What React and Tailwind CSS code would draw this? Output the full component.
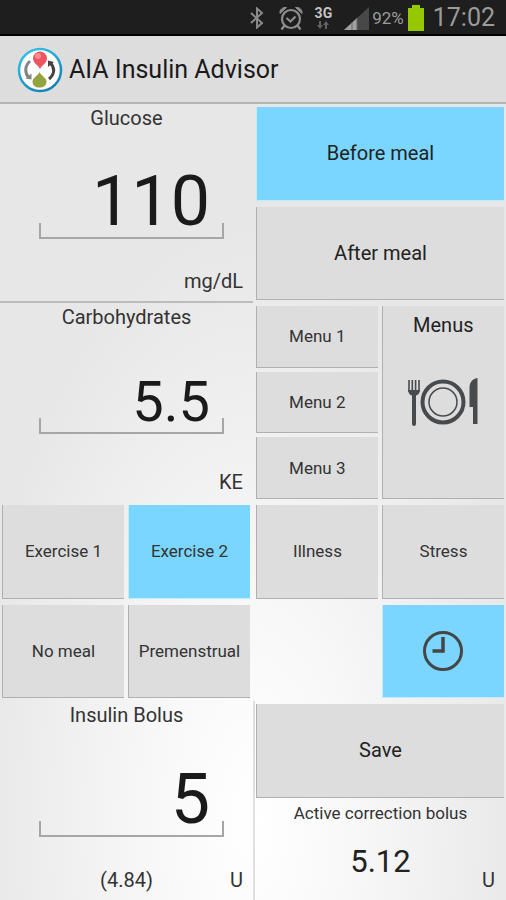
import { useState } from 'react'
import clsx from 'clsx'

function StatusBar() {
  return (
    <div className="h-[36px] shrink-0 bg-[#1e1e1e] border-b-2 border-black flex items-center justify-end pt-[2px] pr-[11px] text-[#9b9b9b]">
      {/* Bluetooth */}
      <svg width="16" height="22" viewBox="0 0 16 22" fill="none" stroke="#8a8a8a" strokeWidth="2">
        <path d="M2 6l11 10-5 4.500V1.500L13 6 2 16" />
      </svg>
      {/* Alarm */}
      <svg className="ml-[13px]" width="26" height="26" viewBox="0 0 26 26" fill="none" stroke="#8e8e8e" strokeWidth="2.200">
        <circle cx="13" cy="14" r="9" />
        <path d="M8.500 13l4 3.500 5-5M6.500 20.500l-3 4M19.500 20.500l3 4" />
        <path d="M2 8.500C1.500 4.500 4.500 2 8.500 2.500zM24 8.500c.5-4-2.500-6.500-6.500-6z" fill="#8e8e8e" strokeWidth="1" />
      </svg>
      {/* Network */}
      <div className="ml-[11px] flex flex-col items-center">
        <span className="text-[14px] leading-[14px] font-bold text-[#c4c4c4]">3G</span>
        <svg width="16" height="10" viewBox="0 0 16 10" fill="#626262">
          <path d="M4 1h2v4h2L5 9 2 5h2zM10 9V5H8l3-4 3 4h-2v4z" />
        </svg>
      </div>
      {/* Signal */}
      <svg className="ml-[12px]" width="25" height="23" viewBox="0 0 25 23">
        <path d="M0 23L25 0v23z" fill="#484848" />
        <path d="M0 23l13-12v12z" fill="#a0a0a0" />
        <path d="M8 15.500V23M13 11v12" stroke="#666" strokeWidth="1" />
      </svg>
      <span className="ml-[3px] text-[17px] leading-[24px]">92%</span>
      {/* Battery */}
      <svg className="ml-[3px]" width="18" height="26" viewBox="0 0 18 26" fill="#95c800">
        <path d="M5 0h8v3h4v23H1V3h4z" />
      </svg>
      <span className="ml-[8px] text-[25px] leading-[32px]">17:02</span>
    </div>
  )
}

function Logo() {
  return (
    <svg width="46" height="46" viewBox="0 0 46 46">
      <defs>
        <linearGradient id="ring" x1="0" y1="0" x2="0.6" y2="1">
          <stop offset="0" stopColor="#35c8f0" />
          <stop offset="1" stopColor="#1583b5" />
        </linearGradient>
      </defs>
      <circle cx="23" cy="23" r="21" fill="#fff" stroke="url(#ring)" strokeWidth="2.500" />
      <path d="M23 22c-2-4-7-6-7-10.500a7 7 0 0 1 14 0C30 16 25 18 23 22z" fill="#ee5560" />
      <circle cx="21" cy="9" r="3" fill="#f58a90" />
      <path d="M22.500 25c2 4 7 6 7 9.500 0 4-3 6-7 6s-7-2-7-6c0-3.500 5-5.500 7-9.500z" fill="#94a23f" />
      <path d="M13 14c-5.500 5-5.500 12-1 17" fill="none" stroke="#858585" strokeWidth="3" />
      <path d="M8.500 31.500l6 1V26.500z" fill="#858585" />
      <path d="M32 32c6-5 6-11 1.500-16" fill="none" stroke="#444" strokeWidth="3" />
      <path d="M37 15l-6-1.500V20z" fill="#444" />
    </svg>
  )
}

function PlateIcon() {
  return (
    <svg width="70" height="48" viewBox="0 0 70 48" fill="none" stroke="#484b4d">
      <path d="M1 2v12M4.300 2v12M7.600 2v12M11 2v12" strokeWidth="1.600" />
      <path d="M.2 12h11.600c0 3.500-2 5-3.800 5.500V46a2 2 0 0 1-4 0V17.500C2.200 17 .2 15.500.2 12z" fill="#484b4d" stroke="none" />
      <circle cx="35" cy="24" r="20.500" strokeWidth="4" />
      <circle cx="35" cy="24" r="14" strokeWidth="1.500" />
      <path d="M69.500 0v46h-4.500V29h-3.500V10c0-4 1.500-9 8-10z" fill="#484b4d" stroke="none" />
    </svg>
  )
}

function ClockIcon() {
  return (
    <svg width="42" height="42" viewBox="0 0 42 42" fill="none" stroke="#464646">
      <circle cx="21" cy="21" r="18.500" strokeWidth="3" />
      <path d="M21 7v14H10.500" strokeWidth="3.500" />
    </svg>
  )
}

function Tile({ active, small, className, children, ...props }) {
  return (
    <button
      type="button"
      aria-pressed={active}
      className={clsx(
        'min-w-0 flex-1 cursor-pointer border-l border-b',
        active ? 'bg-[#7bd6ff] border-[#c4ecff]' : 'bg-[#dddddd] border-[#b0b0b0]',
        small ? 'text-[17px] leading-[24px] text-[#333]' : 'text-[20px] leading-[24px] text-[#222]',
        className
      )}
      {...props}
    >
      {children}
    </button>
  )
}

function Field({ id, label, unit, note, value, onChange, small, className }) {
  return (
    <div className={clsx('row-span-2 flex flex-col', className)}>
      <label htmlFor={id} className="text-center text-[20px] leading-[28px] text-[#333]">
        {label}
      </label>
      <div className="flex-1 flex items-center pl-[39px] pr-[29px]">
        <div className="relative w-full">
          <input
            id={id}
            inputMode="decimal"
            value={value}
            onChange={(e) => onChange(e.target.value)}
            className={clsx(
              'block w-full bg-transparent pr-[14px] text-right text-[#1a1a1a] outline-none',
              small ? 'h-[64px] text-[56px]' : 'h-[74px] text-[70px]'
            )}
          />
          <span className="pointer-events-none absolute inset-x-0 bottom-0 h-[16px] border-x-2 border-b-2 border-[#a6a6a6]" />
        </div>
      </div>
      <div className="grid grid-cols-3 px-[10px] pb-[10px] text-[20px] leading-[20px] text-[#333]">
        <span className="col-start-2 text-center">{note}</span>
        <span className="text-right">{unit}</span>
      </div>
    </div>
  )
}

export default function App() {
  const [glucose, setGlucose] = useState('110')
  const [carbs, setCarbs] = useState('5.5')
  const [bolus, setBolus] = useState('5')
  const [meal, setMeal] = useState('before')
  const [flags, setFlags] = useState({ exercise2: true, time: true })

  const toggle = (key) => setFlags((prev) => ({ ...prev, [key]: !prev[key] }))

  const leftRow = 'flex gap-[4px] pl-[2px] pr-[3px] pt-[3px] pb-[3px]'
  const rightRow = 'flex gap-[4px] pl-[3px] pr-[2px] pt-[3px] pb-[3px]'

  return (
    <div className="min-h-screen flex flex-col font-['Roboto',sans-serif] bg-[#e7e7e7]">
      <StatusBar />

      <header className="h-[68px] shrink-0 flex items-center gap-[6px] pt-[2px] pl-[17px] bg-[#dddddd] border-b-2 border-[#b4b4b4]">
        <Logo />
        <h1 className="text-[25px] leading-[32px] text-[#1a1a1a]">AIA Insulin Advisor</h1>
      </header>

      <main className="flex-1 grid grid-cols-2 grid-rows-8 grid-flow-col bg-[radial-gradient(ellipse_56%_75%_at_50%_90%,#ffffff,#f8f8f8_35%,#e7e7e7)]">
        {/* Left half */}
        <Field
          id="glucose"
          label="Glucose"
          unit="mg/dL"
          value={glucose}
          onChange={setGlucose}
          className="border-b-2 border-[#bcbcbc]"
        />
        <Field id="carbs" label="Carbohydrates" unit="KE" value={carbs} onChange={setCarbs} small />
        <div className={leftRow}>
          <Tile small active={!!flags.exercise1} onClick={() => toggle('exercise1')}>Exercise 1</Tile>
          <Tile small active={!!flags.exercise2} onClick={() => toggle('exercise2')}>Exercise 2</Tile>
        </div>
        <div className={leftRow}>
          <Tile small active={!!flags.noMeal} onClick={() => toggle('noMeal')}>No meal</Tile>
          <Tile small active={!!flags.premenstrual} onClick={() => toggle('premenstrual')}>Premenstrual</Tile>
        </div>
        <Field id="bolus" label="Insulin Bolus" unit="U" note="(4.84)" value={bolus} onChange={setBolus} />

        {/* Right half */}
        <div className={rightRow}>
          <Tile active={meal === 'before'} onClick={() => setMeal('before')}>Before meal</Tile>
        </div>
        <div className={rightRow}>
          <Tile active={meal === 'after'} onClick={() => setMeal('after')}>After meal</Tile>
        </div>
        <div className={clsx(rightRow, 'row-span-2')}>
          <div className="flex-1 flex flex-col gap-[4px]">
            <Tile small>Menu 1</Tile>
            <Tile small>Menu 2</Tile>
            <Tile small>Menu 3</Tile>
          </div>
          <Tile className="grid grid-rows-[38px_1fr_38px] items-center justify-items-center">
            <span>Menus</span>
            <PlateIcon />
          </Tile>
        </div>
        <div className={rightRow}>
          <Tile small active={!!flags.illness} onClick={() => toggle('illness')}>Illness</Tile>
          <Tile small active={!!flags.stress} onClick={() => toggle('stress')}>Stress</Tile>
        </div>
        <div className={rightRow}>
          <div className="flex-1" />
          <Tile
            active={flags.time}
            onClick={() => toggle('time')}
            aria-label="Time"
            className="flex items-center justify-center"
          >
            <ClockIcon />
          </Tile>
        </div>
        <div className="flex pl-[1px] pr-[2px] pt-[3px] pb-[3px] border-l-2 border-[#e0e0e0]">
          <Tile>Save</Tile>
        </div>
        <div className="flex flex-col border-l-2 border-[#e0e0e0] text-[#333]">
          <h2 className="text-center text-[17px] leading-[24px]">Active correction bolus</h2>
          <div className="flex-1 grid grid-cols-3 items-center px-[11px]">
            <output className="col-start-2 text-center text-[31px] leading-[36px] text-[#222]">5.12</output>
            <span className="self-end pb-[10px] text-right text-[20px] leading-[20px]">U</span>
          </div>
        </div>
      </main>
    </div>
  )
}
